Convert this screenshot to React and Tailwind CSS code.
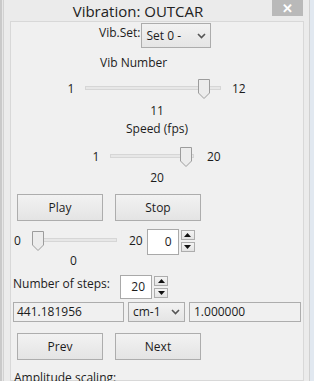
import React from 'react';

const font = { fontFamily: '"Open Sans", "Noto Sans", sans-serif' };

const Thumb = () => (
  <svg width="12" height="20" viewBox="0 0 12 20" className="block">
    <path d="M0.5 0.5 H11.5 V14 L6 19.5 L0.5 14 Z" fill="#ececec" stroke="#9c9c9c" />
  </svg>
);

const Slider = ({ width, pos }) => (
  <div className="relative h-[20px]" style={{ width }}>
    <div className="absolute left-0 right-0 top-[7px] h-[4px] border border-[#d6d6d6] bg-[#e7e7e7]" />
    <div className="absolute top-0" style={{ left: pos }}>
      <Thumb />
    </div>
  </div>
);

const Button = ({ children }) => (
  <button className="flex h-[27px] w-[86px] items-center justify-center border border-[#adadad] bg-gradient-to-b from-[#f2f2f2] to-[#e4e4e4] text-[12px] text-[#1c1c1c]">
    {children}
  </button>
);

const Chevron = () => (
  <svg width="9" height="6" viewBox="0 0 9 6">
    <path d="M1 1 L4.5 4.5 L8 1" fill="none" stroke="#555" strokeWidth="1.6" />
  </svg>
);

const Arrow = ({ up }) => (
  <div className="flex h-[10px] w-[14px] items-center justify-center border border-[#adadad] bg-gradient-to-b from-[#f4f4f4] to-[#e3e3e3]">
    <svg width="7" height="4" viewBox="0 0 7 4">
      {up ? <path d="M0 4 L3.5 0 L7 4 Z" fill="#111" /> : <path d="M0 0 L3.5 4 L7 0 Z" fill="#111" />}
    </svg>
  </div>
);

const Spin = ({ value, w, h }) => (
  <div className="flex items-start gap-[2px]">
    <div className="flex items-center justify-end border border-[#a9a9a9] bg-white pr-[6px] text-[12px]" style={{ width: w, height: h }}>
      {value}
    </div>
    <div className="flex flex-col gap-[2px] pt-[1px]">
      <Arrow up />
      <Arrow />
    </div>
  </div>
);

export default function App() {
  return (
    <div className="flex h-[381px] w-[314px] overflow-hidden bg-[#ebebeb] text-[#1c1c1c]" style={font}>
      <div className="w-[4px] border-l-2 border-r border-l-[#c9c9c9] border-r-[#d2d2d2] bg-[#e6e6e6]" />
      <div className="flex w-[305px] flex-col">
        <div className="flex h-[25px] items-start">
          <div className="w-[268px] pt-[1px] text-center text-[15px] leading-[20px] text-[#222]">Vibration: OUTCAR</div>
          <div className="flex h-[16px] w-[31px] items-center justify-center bg-[#b9b9b9] text-[13px] font-bold leading-none text-white">✕</div>
        </div>
        <div className="ml-[6px] flex h-[360px] w-[294px] flex-col border border-[#d8d8d8] bg-[#f0f0f0] text-[12px]">
          <div className="mt-[1px] flex h-[25px] items-start pl-[88px]">
            <span className="pt-[2px] leading-[16px]">Vib.Set:</span>
            <div className="ml-[1px] flex h-[25px] w-[70px] items-center justify-between border border-[#acacac] bg-gradient-to-b from-[#f2f2f2] to-[#e5e5e5] px-[4px] pt-[1px]">
              <span className="text-[12px]">Set 0 -</span>
              <Chevron />
            </div>
          </div>
          <div className="mt-[7px] h-[16px] pl-[89px] leading-[16px]">Vib Number</div>
          <div className="mt-[8px] flex h-[20px] items-center">
            <span className="ml-[56px] w-[8px] text-center">1</span>
            <div className="ml-[10px]"><Slider width={136} pos={113} /></div>
            <span className="ml-[11px]">12</span>
          </div>
          <div className="mt-[4px] h-[16px] text-center leading-[16px]">11</div>
          <div className="mt-[2px] h-[16px] text-center leading-[16px]">Speed (fps)</div>
          <div className="mt-[10px] flex h-[20px] items-center">
            <span className="ml-[81px] w-[8px] text-center">1</span>
            <div className="ml-[10px]"><Slider width={84} pos={70} /></div>
            <span className="ml-[13px]">20</span>
          </div>
          <div className="mt-[3px] h-[16px] text-center leading-[16px]">20</div>
          <div className="mt-[8px] flex gap-[12px] pl-[6px]">
            <Button>Play</Button>
            <Button>Stop</Button>
          </div>
          <div className="mt-[8px] flex items-start">
            <div className="flex flex-col">
              <div className="mt-[2px] flex h-[20px] items-center">
                <span className="ml-[3px] w-[6px]">0</span>
                <div className="ml-[12px]"><Slider width={85} pos={0} /></div>
                <span className="ml-[12px]">20</span>
              </div>
              <div className="mt-[2px] h-[16px] pl-[59px] leading-[16px]">0</div>
            </div>
            <div className="ml-[4px]">
              <Spin value="0" w={32} h={26} />
            </div>
          </div>
          <div className="mt-[6px] flex h-[24px] items-start">
            <span className="ml-[2px] mt-[1px] w-[107px] leading-[16px]">Number of steps:</span>
            <Spin value="20" w={32} h={24} />
          </div>
          <div className="mt-[3px] flex h-[25px] items-stretch">
            <div className="ml-[2px] flex w-[111px] items-center border border-[#adadad] bg-[#f0f0f0] px-[3px]">441.181956</div>
            <div className="ml-[4px] flex w-[57px] items-center justify-between border border-[#adadad] bg-gradient-to-b from-[#f2f2f2] to-[#e5e5e5] px-[4px]">
              <span>cm-1</span>
              <Chevron />
            </div>
            <div className="ml-[4px] flex w-[112px] items-center border border-[#adadad] bg-[#f0f0f0] px-[4px]">1.000000</div>
          </div>
          <div className="mt-[11px] flex gap-[12px] pl-[6px]">
            <Button>Prev</Button>
            <Button>Next</Button>
          </div>
          <div className="mt-[10px] pl-[3px] leading-[16px]">Amplitude scaling:</div>
        </div>
      </div>
      <div className="w-[5px] border-l border-[#d0d0d0] bg-[#e1e8f0]" />
    </div>
  );
}
